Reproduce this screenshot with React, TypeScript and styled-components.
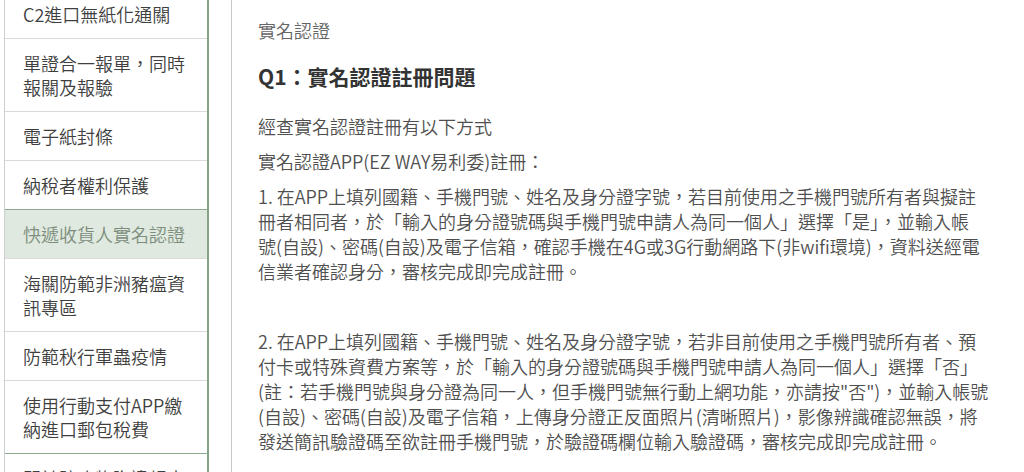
import styled, { createGlobalStyle } from "styled-components";

const GlobalStyle = createGlobalStyle`
    html, body {
        margin: 0;
        padding: 0;
        background: #fff;
    }
    body {
        font-family: "Noto Sans CJK TC", "Noto Sans", sans-serif;
        overflow: hidden;
    }
`;

type MenuEntry = {
    label: string;
    active?: boolean;
    divider?: boolean;
};

const menu: MenuEntry[] = [
    { label: "C2進口無紙化通關" },
    { label: "單證合一報單，同時報關及報驗" },
    { label: "電子紙封條" },
    { label: "納稅者權利保護" },
    { label: "快遞收貨人實名認證", active: true },
    { label: "海關防範非洲豬瘟資訊專區" },
    { label: "防範秋行軍蟲疫情" },
    { label: "使用行動支付APP繳納進口郵包稅費" },
    { label: "關於防疫物資違規出境", divider: true },
];

const steps: string[][] = [
    [
        "1. 在APP上填列國籍、手機門號、姓名及身分證字號，若目前使用之手機門號所有者與擬註",
        "冊者相同者，於「輸入的身分證號碼與手機門號申請人為同一個人」選擇「是」，並輸入帳",
        "號(自設)、密碼(自設)及電子信箱，確認手機在4G或3G行動網路下(非wifi環境)，資料送經電",
        "信業者確認身分，審核完成即完成註冊。",
    ],
    [],
    [
        "2. 在APP上填列國籍、手機門號、姓名及身分證字號，若非目前使用之手機門號所有者、預",
        "付卡或特殊資費方案等，於「輸入的身分證號碼與手機門號申請人為同一個人」選擇「否」",
        "(註：若手機門號與身分證為同一人，但手機門號無行動上網功能，亦請按\"否\")，並輸入帳號",
        "(自設)、密碼(自設)及電子信箱，上傳身分證正反面照片(清晰照片)，影像辨識確認無誤，將",
        "發送簡訊驗證碼至欲註冊手機門號，於驗證碼欄位輸入驗證碼，審核完成即完成註冊。",
    ],
];

const App = () => {
    return (
        <>
            <GlobalStyle />
            <Page>
                <SideMenu>
                    {menu.map((item) => (
                        <MenuItem
                            key={item.label}
                            $active={item.active}
                            $divider={item.divider}
                        >
                            {item.label}
                        </MenuItem>
                    ))}
                </SideMenu>
                <Content>
                    <Crumb>實名認證</Crumb>
                    <Question>Q1：實名認證註冊問題</Question>
                    <Para>經查實名認證註冊有以下方式</Para>
                    <Para>實名認證APP(EZ WAY易利委)註冊：</Para>
                    {steps.map((lines, i) => (
                        <Para key={i}>
                            {lines.length === 0
                                ? "\u00a0"
                                : lines.map((line, j) => (
                                      <span key={j}>
                                          {line}
                                          {j < lines.length - 1 && <br />}
                                      </span>
                                  ))}
                        </Para>
                    ))}
                </Content>
            </Page>
        </>
    );
};

export default App;

const Page = styled.div`
    display: flex;
    align-items: stretch;
    gap: 22px;
    width: 1024px;
    height: 472px;
    overflow: hidden;
    padding-left: 4px;
    box-sizing: border-box;
`;

const SideMenu = styled.ul`
    flex: 0 0 205px;
    box-sizing: border-box;
    margin: -11px 0 0;
    padding: 0;
    list-style: none;
    border-left: 1px solid #cfcfcf;
    border-right: 2px solid #86a386;
    align-self: flex-start;
    min-height: 520px;
`;

const MenuItem = styled.li<{ $active?: boolean; $divider?: boolean }>`
    padding: 12px 18px;
    font-size: 18px;
    font-weight: 350;
    line-height: 24px;
    color: ${(p) => (p.$active ? "#7d8d7d" : "#3f3f3f")};
    background-color: ${(p) => (p.$active ? "#dfe9df" : "#fff")};
    border-top: 1px solid
        ${(p) => (p.$active || p.$divider ? "#8fab8f" : "#dadada")};
    cursor: pointer;
`;

const Content = styled.div`
    flex: 1;
    border-left: 1px solid #c8c8c8;
    padding: 18px 10px 0 26px;
    color: #4f4f4f;
    font-size: 18px;
    font-weight: 350;
    line-height: 25px;
`;

const Crumb = styled.div`
    color: #666;
`;

const Question = styled.h2`
    margin: 18px 0 23px;
    font-size: 21px;
    line-height: 30px;
    font-weight: 700;
    color: #333;
`;

const Para = styled.p`
    margin: 0 0 10px;
`;
